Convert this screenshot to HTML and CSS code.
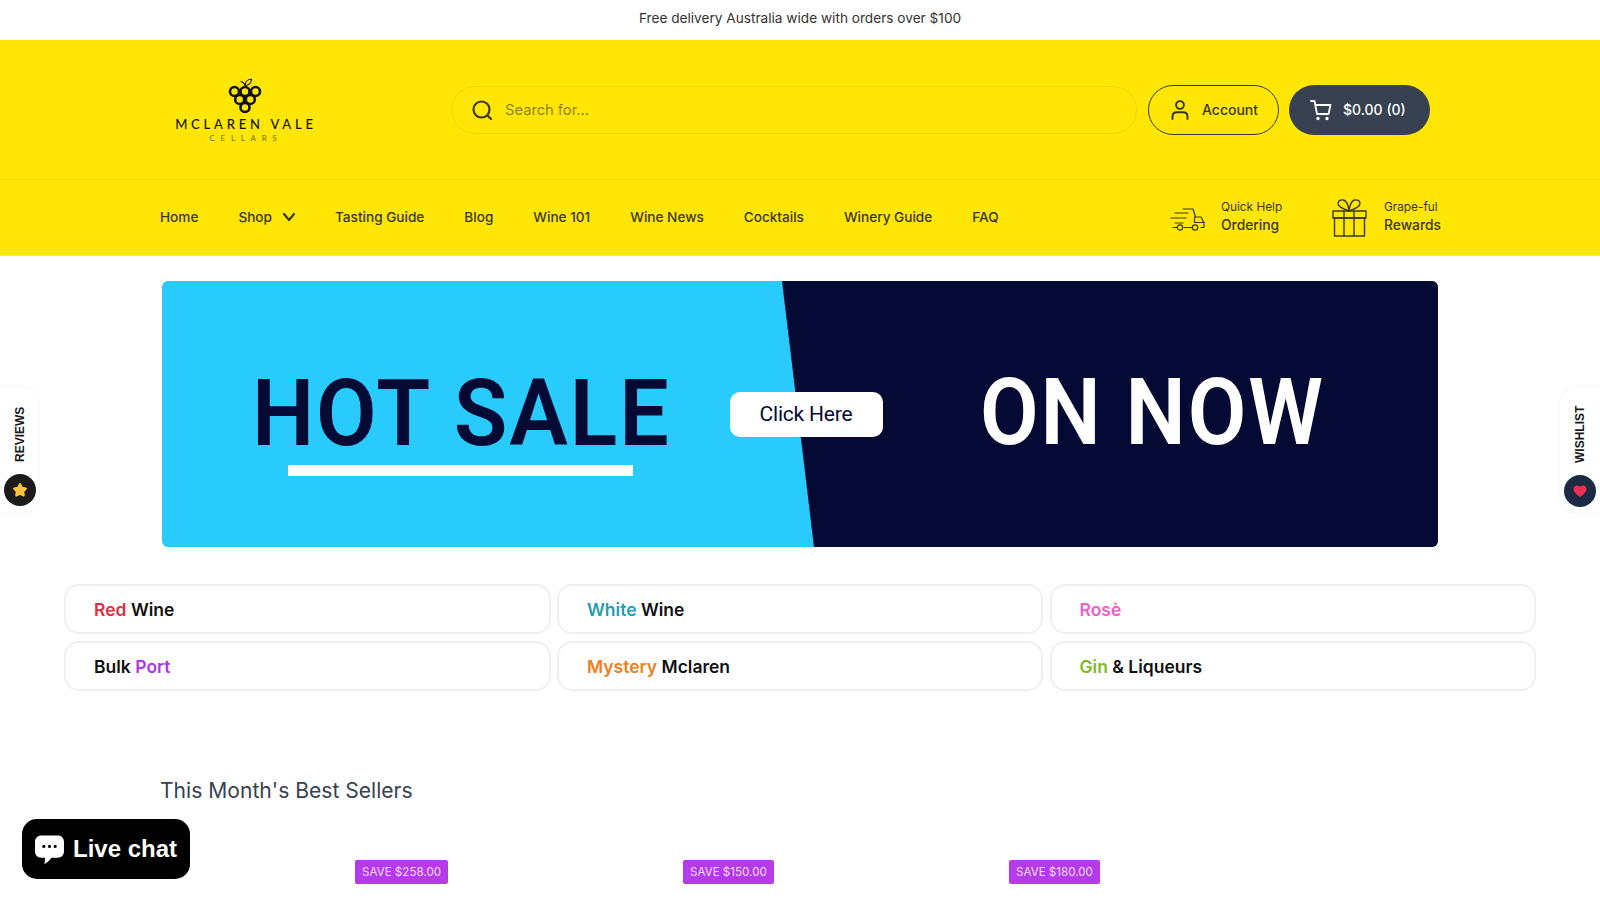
FILE: index.html
```html
<!DOCTYPE html>
<html lang="en">

<head>
    <meta charset="UTF-8" />
    <title>McLaren Vale Cellars</title>
    <link rel="stylesheet" href="styles.css">
</head>

<body>
    <div class="announcement">Free delivery Australia wide with orders over $100</div>

    <header class="site-header">
        <div class="header-main">
            <a class="logo">
                <svg class="logo-mark" width="36" height="36" viewBox="0 0 36 36" fill="none" stroke="#111" stroke-width="2.6">
                    <path d="M18 8 C17.5 5.5 16 4 13.5 3.5 M18 7.5 C18 4 20.5 1.2 24.5 1.2 C24.5 4.8 22 7.5 18 7.5" stroke-width="1.1" />
                    <circle cx="7.5" cy="13.5" r="4.5" />
                    <circle cx="18" cy="13.5" r="4.5" />
                    <circle cx="28.5" cy="13.5" r="4.5" />
                    <circle cx="12.7" cy="21.5" r="4.5" />
                    <circle cx="23.3" cy="21.5" r="4.5" />
                    <circle cx="18" cy="29.5" r="4.5" />
                </svg>
                <span class="logo-name">MCLAREN VALE</span>
                <span class="logo-sub">CELLARS</span>
            </a>
            <div class="search">
                <svg width="24" height="24" viewBox="0 0 24 24" fill="none" stroke="#3d3a1a" stroke-width="2.2" stroke-linecap="round">
                    <circle cx="11.5" cy="11.5" r="8" />
                    <path d="M17.5 17.5 L21 21" />
                </svg>
                <span class="search-text">Search for...</span>
            </div>
            <a class="btn-account">
                <svg width="22" height="22" viewBox="0 0 22 22" fill="none" stroke="#36342a" stroke-width="1.9" stroke-linecap="round">
                    <circle cx="11" cy="6" r="3.9" />
                    <path d="M3.5 20 V17.5 C3.5 14.8 5.5 13.2 8 13.2 H14 C16.5 13.2 18.5 14.8 18.5 17.5 V20" />
                </svg>
                Account
            </a>
            <a class="btn-cart">
                <svg width="24" height="24" viewBox="0 0 24 24" fill="none" stroke="#fff" stroke-width="1.8" stroke-linecap="round" stroke-linejoin="round">
                    <path d="M2 3 H5.5 L8 16 H19.5 L21.5 7 H6.5" />
                    <circle cx="9" cy="20.5" r="0.8" fill="#fff" />
                    <circle cx="18" cy="20.5" r="0.8" fill="#fff" />
                </svg>
                $0.00 (0)
            </a>
        </div>
        <div class="header-nav">
            <nav class="nav-links">
                <a>Home</a>
                <a class="has-sub">Shop
                    <svg width="16" height="16" viewBox="0 0 16 16" fill="none" stroke="#3a3820" stroke-width="2.2" stroke-linecap="round" stroke-linejoin="round">
                        <path d="M3 5 L8 11 L13 5" />
                    </svg>
                </a>
                <a>Tasting Guide</a>
                <a>Blog</a>
                <a>Wine 101</a>
                <a>Wine News</a>
                <a>Cocktails</a>
                <a>Winery Guide</a>
                <a>FAQ</a>
            </nav>
            <div class="promo promo-ordering">
                <svg width="36" height="26" viewBox="0 0 36 26" fill="none" stroke="#3a3820" stroke-width="1.2" stroke-linecap="round" stroke-linejoin="round">
                    <path d="M13 4 H23 L25.5 12 H31 L34 18 V22.5 H31 M22 22.5 H14 M3 22.5 H7 M5 8 H18 M1 13 H16 M5 18 H13" />
                    <path d="M24.5 12 V17.5 H34" />
                    <circle cx="10" cy="22.5" r="2.7" />
                    <circle cx="25" cy="22.5" r="2.7" />
                </svg>
                <div class="promo-text">
                    <span class="promo-small">Quick Help</span>
                    <span class="promo-big">Ordering</span>
                </div>
            </div>
            <div class="promo promo-rewards">
                <svg width="36" height="38" viewBox="0 0 36 38" fill="none" stroke="#3a3820" stroke-width="1.4" stroke-linejoin="round">
                    <path d="M17 12 C11 10 6 7 6 4.5 C6 1.5 9 .5 11.5 1 C14 1.5 16 5 17 12 Z" />
                    <path d="M17 12 C23 10 28 7 28 4.5 C28 1.5 25 .5 22.5 1 C20 1.5 18 5 17 12 Z" />
                    <rect x="1" y="12" width="33" height="7" />
                    <rect x="2.5" y="19" width="30" height="18" />
                    <path d="M12 12 V37 M22 12 V37" />
                </svg>
                <div class="promo-text">
                    <span class="promo-small">Grape-ful</span>
                    <span class="promo-big">Rewards</span>
                </div>
            </div>
        </div>
    </header>

    <section class="banner">
        <div class="banner-dark"></div>
        <div class="sale">
            <div class="sale-title">HOT SALE</div>
            <div class="sale-line"></div>
        </div>
        <a class="sale-btn">Click Here</a>
        <div class="sale-now">ON NOW</div>
    </section>

    <section class="cats">
        <a class="cat"><span class="c-red">Red</span> Wine</a>
        <a class="cat"><span class="c-teal">White</span> Wine</a>
        <a class="cat"><span class="c-pink">Rosè</span></a>
        <a class="cat">Bulk <span class="c-purple">Port</span></a>
        <a class="cat"><span class="c-orange">Mystery</span> Mclaren</a>
        <a class="cat"><span class="c-green">Gin</span> &amp; Liqueurs</a>
    </section>

    <section class="best">
        <h2>This Month's Best Sellers</h2>
        <div class="products">
            <div class="product"></div>
            <div class="product"><span class="save">SAVE $258.00</span></div>
            <div class="product"><span class="save">SAVE $150.00</span></div>
            <div class="product"><span class="save">SAVE $180.00</span></div>
        </div>
    </section>

    <aside class="side-tab side-left">
        <span class="side-label">REVIEWS</span>
        <span class="side-dot dot-dark">
            <svg width="16" height="16" viewBox="0 0 16 16">
                <path d="M8 2 L10 5.8 L14 6.5 L11.2 9.6 L11.8 13.5 L8 11.8 L4.2 13.5 L4.8 9.6 L2 6.5 L6 5.8 Z" fill="#fbc23a" stroke="#fbc23a" stroke-width="2" stroke-linejoin="round" />
            </svg>
        </span>
    </aside>

    <aside class="side-tab side-right">
        <span class="side-label">WISHLIST</span>
        <span class="side-dot dot-navy">
            <svg width="14" height="14" viewBox="0 0 14 14">
                <path d="M7 13 C3 10 .5 8 .5 5 C.5 2.8 2.2 1.5 4 1.5 C5.2 1.5 6.3 2 7 3 C7.7 2 8.8 1.5 10 1.5 C11.8 1.5 13.5 2.8 13.5 5 C13.5 8 11 10 7 13 Z" fill="#ee2f55" />
            </svg>
        </span>
    </aside>

    <a class="live-chat">
        <svg width="31" height="31" viewBox="0 0 30 30">
            <path d="M7 1.5 H23 C26.5 1.5 29 4 29 7.5 V17 C29 20.5 26.5 23 23 23 H17 C15 25.5 12.5 28 10 29 C10.5 27 10.7 25 10.5 23 H7 C3.5 23 1 20.5 1 17 V7.5 C1 4 3.5 1.5 7 1.5 Z" fill="#fff" />
            <circle cx="9.5" cy="12" r="1.5" fill="#000" />
            <circle cx="15" cy="12" r="1.5" fill="#000" />
            <circle cx="20.5" cy="12" r="1.5" fill="#000" />
        </svg>
        Live chat
    </a>
</body>

</html>
```

FILE: styles.css
```css
html,
body {
    height: 900px;
    overflow: hidden;
}

body {
    margin: 0;
    background: #fff;
    font-family: 'Inter', 'Noto Sans', sans-serif;
    color: #374151;
}

.announcement {
    height: 40px;
    line-height: 37px;
    text-align: center;
    font-size: 13.65px;
    color: #333;
    background: #fff;
}

.site-header {
    background: #ffe605;
    border-bottom: 1px solid #e6e2b0;
}

.header-main {
    height: 140px;
    display: flex;
    align-items: center;
    padding-left: 160px;
    border-bottom: 1px solid #ecd60c;
    box-sizing: border-box;
}

.logo {
    width: 172px;
    margin-right: 119px;
    display: flex;
    flex-direction: column;
    align-items: center;
    color: #111;
}

.logo-mark {
    margin: 1px 3px 0 0;
}

.logo-name {
    margin-top: 2px;
    font-family: 'Lato', sans-serif;
    font-size: 13px;
    font-weight: 500;
    letter-spacing: 3.8px;
    white-space: nowrap;
}

.logo-sub {
    font-family: 'Lato', sans-serif;
    font-size: 8px;
    letter-spacing: 5.7px;
    color: #77701e;
    margin-top: 1px;
}

.search {
    width: 686px;
    height: 48px;
    margin-right: 11px;
    box-sizing: border-box;
    border: 1px solid #ecd60c;
    border-radius: 24px;
    padding: 0 18px;
    display: flex;
    align-items: center;
    gap: 11px;
}

.search-text {
    font-size: 14.7px;
    color: #8f8414;
}

.btn-account,
.btn-cart {
    height: 50px;
    box-sizing: border-box;
    border-radius: 25px;
    display: flex;
    align-items: center;
    font-size: 14px;
    font-weight: 450;
}

.btn-account {
    width: 131px;
    margin-right: 10px;
    padding-left: 20px;
    gap: 11px;
    border: 1px solid #3a3820;
    color: #3a3820;
}

.btn-cart {
    width: 141px;
    padding-left: 20px;
    gap: 10px;
    background: #374151;
    color: #fff;
}

.header-nav {
    height: 75px;
    display: flex;
    align-items: center;
    padding-left: 160px;
}

.nav-links {
    display: flex;
    gap: 40px;
    width: 1010px;
    padding-bottom: 2px;
    font-size: 13.6px;
    font-weight: 450;
    color: #3a3820;
}

.has-sub {
    display: flex;
    align-items: center;
    gap: 9px;
}

.has-sub svg {
    margin-right: -2px;
}

.promo {
    display: flex;
    align-items: center;
}

.promo-ordering {
    width: 162px;
    gap: 15px;
}

.promo-rewards {
    gap: 16px;
}

.promo-text {
    display: flex;
    flex-direction: column;
    gap: 3px;
    padding-bottom: 2px;
    color: #3a3820;
}

.promo-small {
    font-size: 11.8px;
}

.promo-big {
    font-size: 13.8px;
    font-weight: 450;
}

.banner {
    position: relative;
    width: 1276.5px;
    height: 266px;
    margin: 25px 0 0 161.5px;
    background: #29cbfd;
    border-radius: 6px;
    overflow: hidden;
    display: flex;
    align-items: center;
    font-family: 'Roboto', sans-serif;
}

.banner-dark {
    position: absolute;
    inset: 0;
    background: #040a33;
    clip-path: polygon(620.5px 0, 100% 0, 100% 100%, 652.5px 100%);
}

.sale {
    position: relative;
    width: 427px;
    margin: 15px 0 0 90px;
}

.sale-title {
    font-size: 92px;
    font-weight: 600;
    line-height: 92px;
    color: #040a33;
    white-space: nowrap;
    letter-spacing: 2px;
    transform: scaleX(0.955);
    transform-origin: left center;
}

.sale-line {
    width: 345px;
    height: 11px;
    margin: 5px 0 0 36px;
    background: #fff;
}

.sale-btn {
    position: relative;
    width: 153px;
    height: 45px;
    margin-left: 51px;
    background: #fff;
    border-radius: 10px;
    color: #040a33;
    font-size: 21px;
    letter-spacing: -0.2px;
    line-height: 45px;
    text-align: center;
}

.sale-now {
    position: relative;
    margin: -2px 0 0 97px;
    font-size: 92px;
    font-weight: 600;
    line-height: 92px;
    color: #fff;
    white-space: nowrap;
    letter-spacing: 2px;
    transform: scaleX(0.925);
    transform-origin: left center;
}

.cats {
    display: grid;
    grid-template-columns: 486.5px 486px 486.5px;
    gap: 7px 6.5px;
    margin: 37px 0 0 64px;
}

.cat {
    height: 50px;
    box-sizing: border-box;
    border: 2px solid #f0f0f1;
    border-radius: 15px;
    padding-left: 28px;
    line-height: 48px;
    font-size: 17.5px;
    font-weight: 600;
    color: #111;
}

.c-red { color: #e0313f; }
.c-teal { color: #1f9eb4; }
.c-pink { color: #ef5fc7; }
.c-purple { color: #b035e8; }
.c-orange { color: #ee7f22; }
.c-green { color: #7cbc22; }

.best {
    padding: 0 160px;
}

.best h2 {
    margin: 85px 0 0;
    font-size: 21.1px;
    font-weight: 400;
    line-height: 30px;
    color: #374151;
}

.products {
    display: grid;
    grid-template-columns: 195px 328px 326px 1fr;
    margin-top: 54px;
}

.save {
    display: inline-block;
    height: 24px;
    line-height: 24px;
    padding: 0 7px;
    border-radius: 2px;
    background: #b53ae9;
    color: #f3dcfb;
    font-size: 11.6px;
}

.side-tab {
    position: fixed;
    top: 386px;
    height: 128px;
    box-sizing: border-box;
    background: #fff;
    border: 1px solid #f6f6f6;
    display: flex;
    flex-direction: column;
    align-items: center;
}

.side-left {
    left: 0;
    width: 40px;
    border-left: 0;
    border-radius: 0 18px 18px 0;
    padding-top: 17px;
}

.side-right {
    right: 0;
    width: 41px;
    border-right: 0;
    border-radius: 18px 0 0 18px;
    padding-top: 18px;
}

.side-label {
    writing-mode: vertical-rl;
    transform: rotate(180deg);
    font-family: 'Liberation Sans', sans-serif;
    font-size: 12px;
    font-weight: 700;
    height: 58px;
    text-align: left;
    color: #1a1a1a;
    line-height: 12px;
}

.side-dot {
    width: 32px;
    height: 32px;
    margin-top: 12px;
    border-radius: 50%;
    display: flex;
    align-items: center;
    justify-content: center;
}

.dot-dark { background: #1b1b1b; }
.dot-navy { background: #1d2a44; }

.live-chat {
    position: fixed;
    left: 22px;
    bottom: 21px;
    width: 168px;
    height: 60px;
    box-sizing: border-box;
    padding-left: 12px;
    background: #000;
    border-radius: 15px;
    display: flex;
    align-items: center;
    gap: 8px;
    color: #fff;
    font-family: 'Liberation Sans', sans-serif;
    font-size: 24px;
    font-weight: 700;
}
```
